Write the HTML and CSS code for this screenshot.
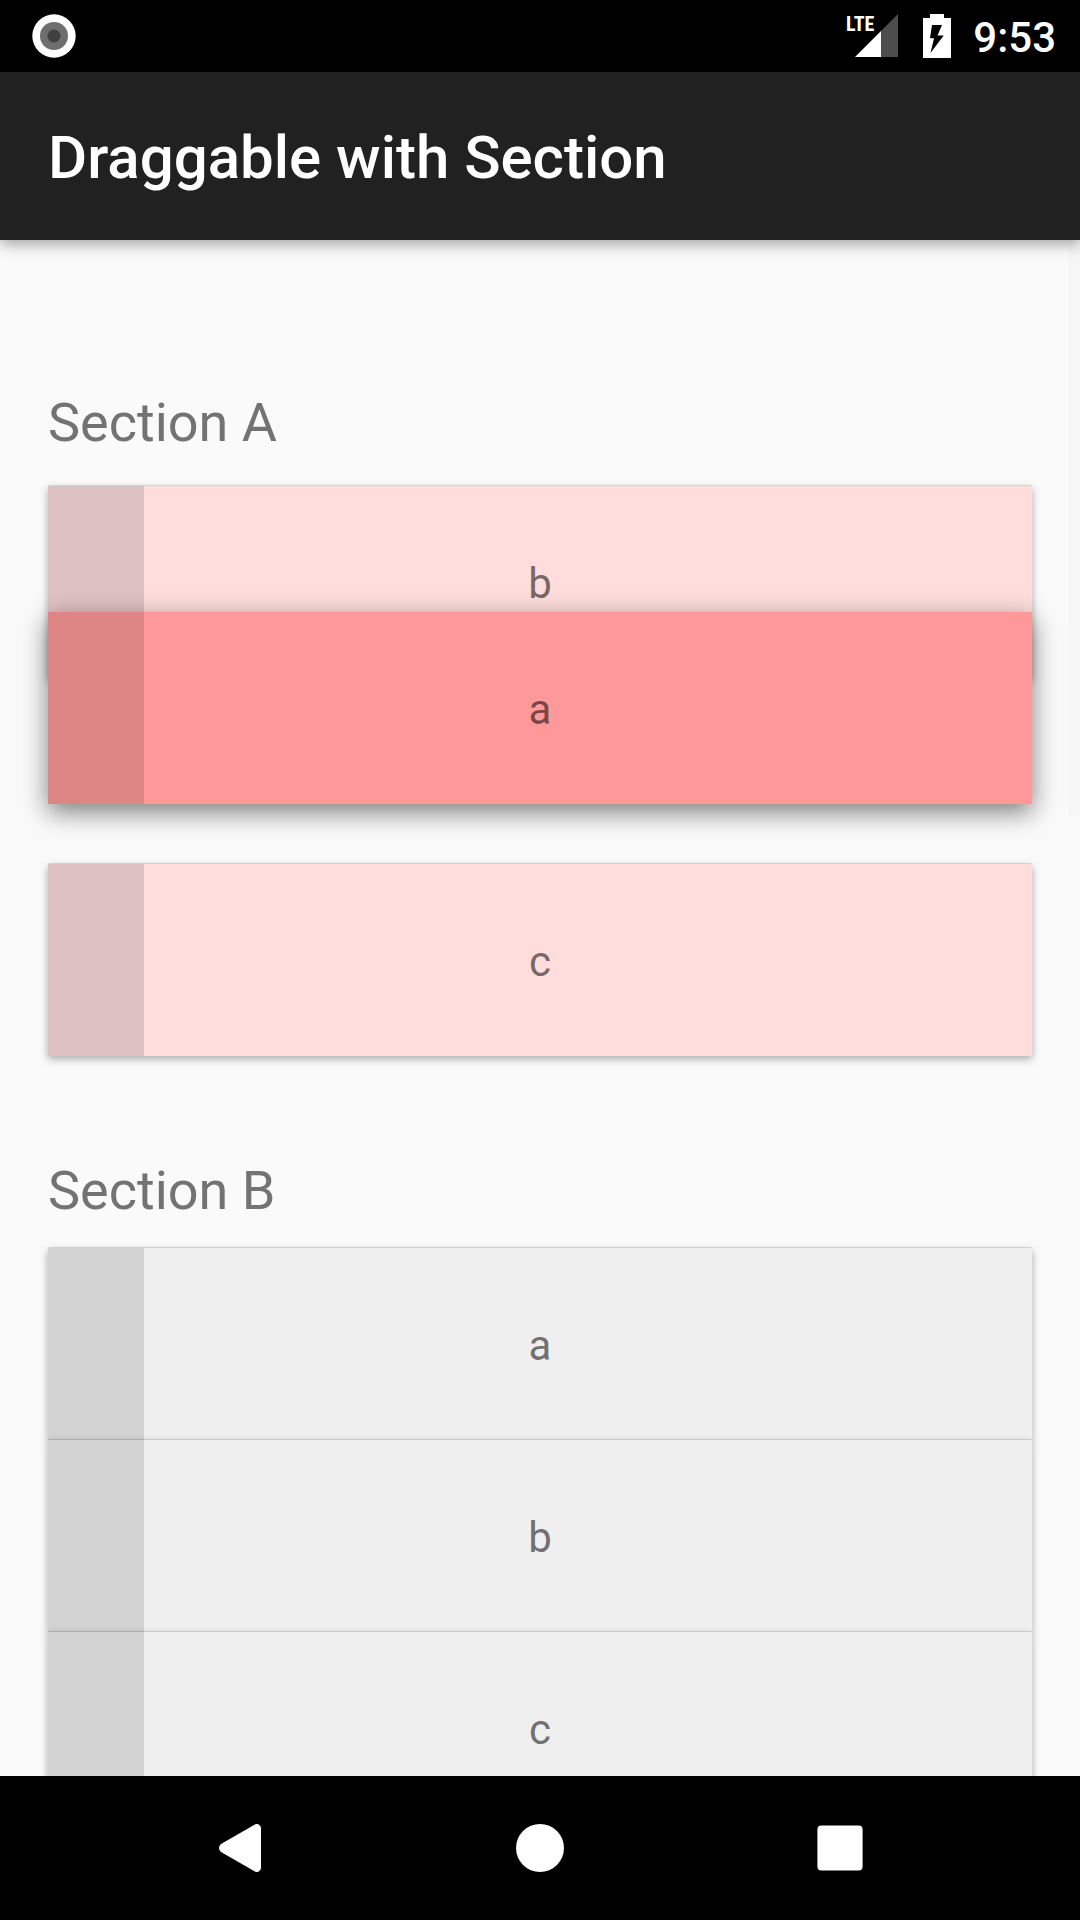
FILE: index.html
```html
<!DOCTYPE html>
<html lang="en">
<head>
<meta charset="utf-8">
<meta name="viewport" content="width=device-width, initial-scale=1">
<title>Draggable with Section</title>
<link rel="stylesheet" href="styles.css">
</head>
<body>
<div class="status-bar">
  <svg class="status-dot" width="44" height="44" viewBox="0 0 44 44" aria-hidden="true">
    <circle cx="22" cy="22" r="21.7" fill="#fff"/>
    <circle cx="22" cy="22" r="14" fill="#6e6e6e"/>
    <circle cx="22" cy="22" r="6.5" fill="#404040"/>
  </svg>
  <div class="status-icons">
    <div class="network">
      <span class="network-type">LTE</span>
      <svg width="44" height="44" viewBox="0 0 44 44" aria-hidden="true">
        <path d="M43 0V43H26V17z" fill="#4d4d4d"/>
        <path d="M0 43L26 17V43z" fill="#fff"/>
      </svg>
    </div>
    <svg class="battery" width="28" height="44" viewBox="0 0 28 44" aria-hidden="true">
      <path fill="#fff" fill-rule="evenodd" d="M7 0H21V4H28V44H0V4H7zM9 11L7 24.3H11L7.5 39L20.7 21.500H14.500L19 11z"/>
    </svg>
    <time class="clock">9:53</time>
  </div>
</div>

<header class="app-bar">
  <h1 class="app-title">Draggable with Section</h1>
</header>

<div class="viewport">
  <main class="content">
    <section>
      <h2 class="section-title">Section A</h2>
      <ul class="list list-spaced">
        <li class="item item-pink"><span class="handle"></span><span class="label">b</span></li>
        <li class="item item-pink"><span class="handle"></span><span class="label">c</span></li>
        <li class="item item-dragged"><span class="handle"></span><span class="label">a</span></li>
      </ul>
    </section>
    <section>
      <h2 class="section-title">Section B</h2>
      <ul class="list">
        <li class="item"><span class="handle"></span><span class="label">a</span></li>
        <li class="item"><span class="handle"></span><span class="label">b</span></li>
        <li class="item"><span class="handle"></span><span class="label">c</span></li>
      </ul>
    </section>
  </main>
  <div class="scroll-thumb"></div>
</div>

<nav class="nav-bar">
  <button class="nav-button" type="button" aria-label="Back">
    <svg width="48" height="48" viewBox="0 0 48 48"><path fill="#fff" d="M38.500 .8Q41-1 43 .8Q45 2 45 4V44Q45 46 43 47.200Q41 49 38.500 47.200L5 28Q1 24 5 20z"/></svg>
  </button>
  <button class="nav-button" type="button" aria-label="Home">
    <svg width="48" height="48" viewBox="0 0 48 48"><circle cx="24" cy="24" r="24" fill="#fff"/></svg>
  </button>
  <button class="nav-button" type="button" aria-label="Overview">
    <svg width="48" height="48" viewBox="0 0 48 48"><rect x="1.4" y="1.4" width="45.2" height="45.2" rx="4" fill="#fff"/></svg>
  </button>
</nav>
</body>
</html>
```
FILE: styles.css
```css
* {
  box-sizing: border-box;
}

body {
  margin: 0;
  height: 100vh;
  display: flex;
  flex-direction: column;
  background: #fafafa;
  color: #737373;
  font-family: Roboto, "Liberation Sans", sans-serif;
}

svg {
  display: block;
}

.status-bar {
  flex: none;
  display: flex;
  align-items: center;
  justify-content: space-between;
  height: 72px;
  padding: 0 24px 0 32px;
  background: #000;
  color: #fff;
}

.status-icons {
  display: flex;
  align-items: center;
  gap: 24px;
}

.network {
  position: relative;
}

.network-type {
  position: absolute;
  right: 25px;
  top: 0;
  font-family: "Roboto Condensed", "Liberation Sans Narrow", Roboto, sans-serif;
  font-size: 20px;
  line-height: 20px;
  font-weight: 700;
}

.battery {
  margin-right: -2px;
}

.clock {
  padding-top: 4px;
  font-size: 42px;
  line-height: 48px;
  font-weight: 500;
}

.app-bar {
  flex: none;
  display: flex;
  align-items: center;
  height: 168px;
  padding: 4px 48px 0;
  background: #212121;
  color: #fff;
  box-shadow: 0 4px 14px rgba(0, 0, 0, .36);
  z-index: 2;
}

.app-title {
  margin: 0;
  font-size: 60px;
  line-height: 72px;
  font-weight: 500;
}

.viewport {
  flex: 1;
  min-height: 0;
  position: relative;
}

.content {
  height: 100%;
  overflow-y: auto;
  scrollbar-width: none;
  display: flex;
  flex-direction: column;
  gap: 103px;
  padding: 151px 48px 0;
}

.scroll-thumb {
  position: absolute;
  top: 0;
  right: 0;
  width: 12px;
  height: 576px;
  background: #f6f6f6;
}

.section-title {
  margin: 0 0 25px;
  font-size: 54px;
  line-height: 64px;
  font-weight: 400;
}

.list {
  position: relative;
  margin: 0;
  padding: 0;
  list-style: none;
  display: flex;
  flex-direction: column;
}

/* The gap keeps the slot of the lifted item open. */
.list-spaced {
  gap: 186px;
  margin-top: 31px;
}

.item {
  position: relative;
  display: grid;
  align-items: center;
  height: 192px;
  background: #efefef;
  box-shadow: 0 -1px 0 rgba(0, 0, 0, .1), 0 3px 8px rgba(0, 0, 0, .32);
}

.item-pink {
  background: #fedddc;
}

.item-dragged {
  position: absolute;
  top: 126px;
  left: 0;
  right: 0;
  background: #ff9999;
  box-shadow: 0 8px 24px rgba(0, 0, 0, .5);
}

.handle {
  grid-area: 1 / 1;
  width: 96px;
  height: 100%;
  background: #d2d2d2;
}

.item-pink .handle {
  background: #dec1c3;
}

.item-dragged .handle {
  background: #de8685;
}

.label {
  grid-area: 1 / 1;
  padding-top: 4px;
  text-align: center;
  font-size: 42px;
  line-height: 48px;
  color: rgba(0, 0, 0, .54);
}

.nav-bar {
  flex: none;
  display: grid;
  grid-template-columns: repeat(3, 1fr);
  height: 144px;
  padding: 0 90px;
  background: #000;
  z-index: 2;
}

.nav-button {
  display: flex;
  align-items: center;
  justify-content: center;
  padding: 0;
  border: 0;
  background: none;
}
```
